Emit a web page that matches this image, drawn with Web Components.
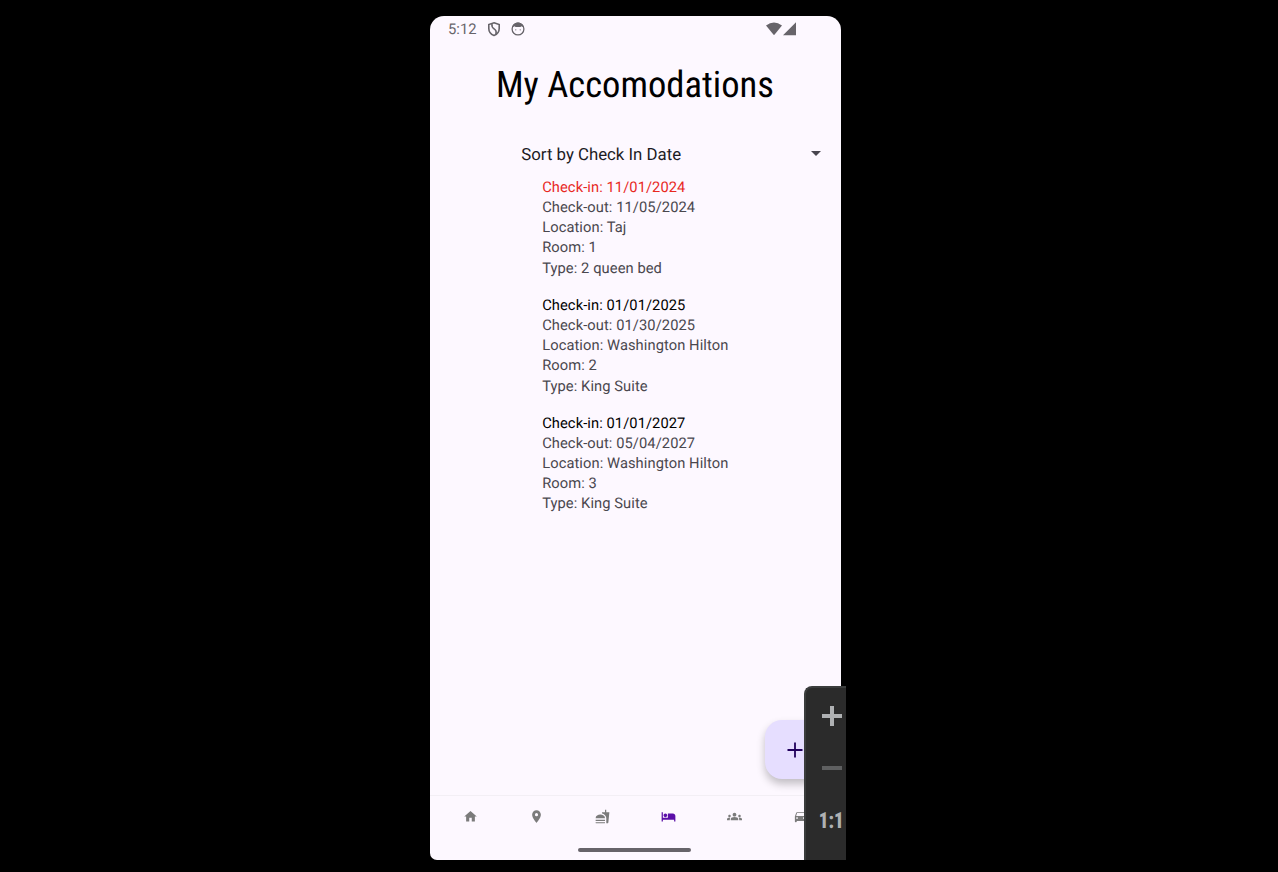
<!DOCTYPE html>
<html lang="en">
<head>
<meta charset="utf-8">
<title>My Accomodations</title>
<style>
html,body{margin:0;height:100%;background:#000;overflow:hidden}
body{font-family:Roboto,"Liberation Sans",sans-serif;text-rendering:geometricPrecision}
</style>
</head>
<body>
<emulator-stage>
  <phone-screen>
    <status-bar></status-bar>
    <page-title>My Accomodations</page-title>
    <sort-picker>Sort by Check In Date</sort-picker>
    <stay-list>
      <stay-card class="past" checkin="11/01/2024" checkout="11/05/2024" location="Taj" room="1" type="2 queen bed"></stay-card>
      <stay-card checkin="01/01/2025" checkout="01/30/2025" location="Washington Hilton" room="2" type="King Suite"></stay-card>
      <stay-card checkin="01/01/2027" checkout="05/04/2027" location="Washington Hilton" room="3" type="King Suite"></stay-card>
    </stay-list>
    <add-button slot="float"></add-button>
    <bottom-nav slot="bottom"></bottom-nav>
  </phone-screen>
  <zoom-panel slot="panel"></zoom-panel>
</emulator-stage>
<script>
const define = (name, html, setup) => {
  const t = document.createElement('template');
  t.innerHTML = html;
  customElements.define(name, class extends HTMLElement {
    connectedCallback() {
      if (this.shadowRoot) return;
      this.attachShadow({mode: 'open'}).append(t.content.cloneNode(true));
      if (setup) setup(this, this.shadowRoot);
    }
  });
};

define('emulator-stage', `<style>
:host{display:flex;justify-content:flex-start;box-sizing:border-box;width:1278px;height:872px;padding:16px 0 12px 430px;background:#000;position:relative}
::slotted(zoom-panel){position:absolute;left:804px;top:686px}
</style><slot></slot><slot name="panel"></slot>`);

define('phone-screen', `<style>
:host{display:flex;flex-direction:column;position:relative;width:411px;height:844px;background:#fdf8ff;border-radius:14px 14px 7px 7px;overflow:hidden}
main{flex:1;display:flex;flex-direction:column}
::slotted(add-button){position:absolute;left:335px;top:704px}
</style><main><slot></slot></main><slot name="bottom"></slot><slot name="float"></slot>`);

define('status-bar', `<style>
:host{display:flex;align-items:center;height:26px;padding:0 45px 0 18px;color:#67646a;font-size:14.8px}
svg{display:block;fill:currentColor}
span{width:29px;white-space:nowrap}
.shield{margin-left:10px}.face{margin-left:9.500px}.wifi{margin-left:auto;margin-top:-1px}.signal{margin-left:1px;margin-top:-1px}
</style><span>5:12</span>
<svg class="shield" width="14" height="16" viewBox="0 0 14 16"><path d="M7 1.800 12.200 3.500V7.400C12.200 10.800 10 13.200 7 14.400 4 13.200 1.800 10.800 1.800 7.400V3.500Z" style="fill:none;stroke:currentColor;stroke-width:1.600"/><path d="M5 3C4.500 6 5.500 6.900 7 7.800S10 9.500 8.800 13" style="fill:none;stroke:currentColor;stroke-width:1.600"/></svg>
<svg class="face" width="14" height="14" viewBox="0 0 14 14"><circle cx="7" cy="7" r="5.900" style="fill:none;stroke:currentColor;stroke-width:1.300"/><path d="M1.600 5.600C2.500 1.800 4.700.500 7 .500s4.500 1.300 5.400 5.100L10.800 4.200 9.300 5H4.700L3.200 4.200Z"/><circle cx="4.800" cy="7.800" r=".6"/><circle cx="9.200" cy="7.800" r=".6"/></svg>
<svg class="wifi" width="16" height="14" viewBox="0 0 16 14"><path d="M0 3.600Q8-2.600 16 3.600L8 13.300Z"/></svg>
<svg class="signal" width="13" height="14" viewBox="0 0 13 14"><path d="M13 .200V13.200H0Z"/></svg>`);

define('page-title', `<style>
:host{display:flex;justify-content:center;height:84px;align-items:center;color:#000;font-size:36.6px;line-height:44px}
span{white-space:nowrap;font-stretch:75%;padding:2px 1px 0 0}
</style><span><slot></slot></span>`);

define('sort-picker', `<style>
:host{display:flex;align-items:center;justify-content:space-between;height:50px;padding:5px 20px 0 91.3px;box-sizing:border-box;color:#1c1b1f;font-size:16.8px}
span{padding-top:3px}
</style><span><slot></slot></span><svg width="10" height="5" viewBox="0 0 10 5"><path d="M0 0H10L5 5Z" fill="#49454f"/></svg>`);

define('stay-list', `<style>
:host{display:flex;flex-direction:column;gap:16.8px;padding:.6px 0 0 112.2px}
</style><slot></slot>`);

define('stay-card', `<style>
:host{display:flex;flex-direction:column;color:#4a474e;font-size:14.7px;line-height:20.24px;letter-spacing:.08px}
.in{color:#000}:host(.past) .in{color:#e8291f}
</style><div class="in"></div><div></div><div></div><div></div><div></div>`, (el, root) => {
  const labels = [['Check-in', 'checkin'], ['Check-out', 'checkout'], ['Location', 'location'], ['Room', 'room'], ['Type', 'type']];
  root.querySelectorAll('div').forEach((d, i) => d.textContent = labels[i][0] + ': ' + el.getAttribute(labels[i][1]));
});

define('add-button', `<style>
:host{display:flex;align-items:center;justify-content:center;width:60px;height:59px;border-radius:17px;background:#e6deff;box-shadow:0 5px 9px rgba(0,0,0,.24)}
</style><svg width="16" height="16" viewBox="0 0 16 16"><path d="M8 .500V15.500M.500 8H15.500" stroke="#21005d" stroke-width="1.800"/></svg>`);

define('bottom-nav', `<style>
:host{display:flex;flex-direction:column;height:65px;box-sizing:border-box;border-top:1px solid #f3eff5}
nav{display:grid;grid-template-columns:repeat(6,66px);padding-left:7px;height:41px;align-items:center;justify-items:center;flex:none}
svg{display:block;fill:#7b7b7b}.active{fill:#5b0fa8}
i{display:block;width:113px;height:4px;border-radius:2px;background:#67646a;margin:11.4px 0 0 148px}
</style><nav>
<svg width="15" height="15" viewBox="0 0 24 24"><path d="M10 20v-6h4v6h5v-8h3L12 3 2 12h3v8z"/></svg>
<svg width="15" height="15" viewBox="0 0 24 24"><path d="M12 2C8.130 2 5 5.130 5 9c0 5.250 7 13 7 13s7-7.750 7-13c0-3.870-3.130-7-7-7zm0 9.500a2.500 2.500 0 0 1 0-5 2.500 2.500 0 0 1 0 5z"/></svg>
<svg width="15" height="15" viewBox="0 0 24 24"><path d="M18.060 22.990h1.660c.840 0 1.530-.640 1.630-1.460L23 5.050h-5V1h-1.970v4.050h-4.970l.300 2.340c1.710.470 3.310 1.320 4.270 2.260 1.440 1.420 2.430 2.890 2.430 5.290v8.050zM1 21.990V21h15.030v.990c0 .550-.450 1-1.010 1H2.010c-.560 0-1.010-.450-1.010-1zm15.030-7c0-8-15.030-8-15.030 0h15.030zM1.020 17h15v2h-15z"/></svg>
<svg class="active" width="15" height="15" viewBox="0 0 24 24"><path d="M7 13c1.660 0 3-1.340 3-3S8.660 7 7 7s-3 1.340-3 3 1.340 3 3 3zm12-6h-8v7H3V5H1v15h2v-3h18v3h2v-9c0-2.210-1.790-4-4-4z"/></svg>
<svg width="15" height="15" viewBox="0 0 24 24"><path d="M12 12.750c1.630 0 3.070.390 4.240.900 1.080.480 1.760 1.560 1.760 2.730V18H6v-1.610c0-1.180.680-2.260 1.760-2.730 1.170-.520 2.610-.910 4.240-.910zM4 13c1.100 0 2-.900 2-2s-.900-2-2-2-2 .900-2 2 .900 2 2 2zm1.130 1.100c-.370-.060-.740-.100-1.130-.100-.990 0-1.930.210-2.780.580C.480 14.900 0 15.620 0 16.430V18h4.500v-1.610c0-.830.230-1.610.630-2.290zM20 13c1.100 0 2-.900 2-2s-.900-2-2-2-2 .900-2 2 .900 2 2 2zm4 3.430c0-.810-.480-1.530-1.220-1.850-.850-.370-1.790-.580-2.780-.580-.390 0-.760.040-1.130.100.400.680.630 1.460.630 2.290V18H24v-1.570zM12 6c1.660 0 3 1.340 3 3s-1.340 3-3 3-3-1.340-3-3 1.340-3 3-3z"/></svg>
<svg width="15" height="15" viewBox="0 0 24 24"><path d="M18.920 6.010C18.720 5.420 18.160 5 17.500 5h-11c-.660 0-1.210.420-1.420 1.010L3 12v8c0 .550.450 1 1 1h1c.550 0 1-.450 1-1v-1h12v1c0 .550.450 1 1 1h1c.550 0 1-.450 1-1v-8l-2.080-5.990zM6.500 16c-.830 0-1.500-.670-1.500-1.500S5.670 13 6.500 13s1.500.670 1.500 1.500S7.330 16 6.500 16zm11 0c-.830 0-1.500-.670-1.500-1.500s.670-1.500 1.500-1.500 1.500.670 1.500 1.500-.670 1.500-1.500 1.500zM5 11l1.500-4.500h11L19 11H5z"/></svg>
</nav><i></i>`);

define('zoom-panel', `<style>
:host{display:flex;flex-direction:column;align-items:flex-end;box-sizing:border-box;width:42px;height:174px;padding:18px 4px 0 0;background:#2b2b2b;border-left:2px solid #3b3d3d;border-top:2px solid #3b3d3d;border-radius:8px 0 0 0}
svg{display:block;flex:none}
.minus{margin-top:40px}
b{color:#afb1b3;font:900 22.5px/24px Roboto,sans-serif;font-stretch:75%;margin:39px -2px 0 0;white-space:nowrap;transform:scaleX(.84);transform-origin:right}
</style>
<svg width="20" height="20" viewBox="0 0 20 20"><path d="M8 0h4v8h8v4h-8v8H8v-8H0V8h8z" fill="#afb1b3"/></svg>
<svg class="minus" width="20" height="4" viewBox="0 0 20 4"><path d="M0 0h20v4H0z" fill="#5f6061"/></svg>
<b>1:1</b>`);
</script>
</body>
</html>
